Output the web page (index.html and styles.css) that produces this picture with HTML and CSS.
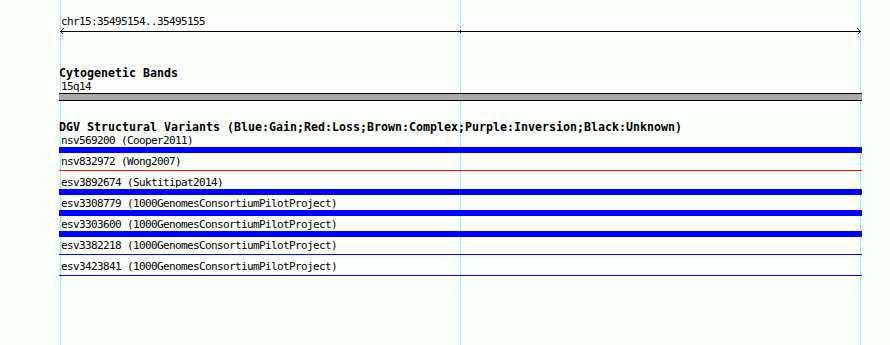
FILE: index.html
```html
<!DOCTYPE html>
<html>
<head>
  <title>chr15:35495154..35495155</title>
  <link rel="stylesheet" href="styles.css">
</head>
<body>
  <div class="panel">
    <div class="tracks">
      <div class="ruler-label">chr15:35495154..35495155</div>
      <svg class="ruler" width="803" height="7" viewBox="0 0 803 7" shape-rendering="crispEdges">
        <rect x="1" y="3" width="801" height="1" fill="#000"/>
        <rect x="401" y="2" width="1" height="3" fill="#000"/>
        <polyline points="4.5,0.5 1.5,3.5 4.5,6.5" fill="none" stroke="#000" stroke-width="1"/>
        <polyline points="798.5,0.5 801.5,3.5 798.5,6.5" fill="none" stroke="#000" stroke-width="1"/>
      </svg>

      <div class="track cyto">
        <div class="track-title">Cytogenetic Bands</div>
        <div class="feature-label">15q14</div>
        <div class="band"></div>
      </div>

      <div class="track dgv">
        <div class="track-title">DGV Structural Variants (Blue:Gain;Red:Loss;Brown:Complex;Purple:Inversion;Black:Unknown)</div>

        <div class="feature">
          <div class="feature-label">nsv569200 (Cooper2011)</div>
          <div class="glyph"><div class="bar thick gain"></div></div>
        </div>
        <div class="feature">
          <div class="feature-label">nsv832972 (Wong2007)</div>
          <div class="glyph"><div class="bar thin loss"></div></div>
        </div>
        <div class="feature">
          <div class="feature-label">esv3892674 (Suktitipat2014)</div>
          <div class="glyph"><div class="bar thick gain"></div></div>
        </div>
        <div class="feature">
          <div class="feature-label">esv3308779 (1000GenomesConsortiumPilotProject)</div>
          <div class="glyph"><div class="bar thick gain"></div></div>
        </div>
        <div class="feature">
          <div class="feature-label">esv3303600 (1000GenomesConsortiumPilotProject)</div>
          <div class="glyph"><div class="bar thick gain"></div></div>
        </div>
        <div class="feature">
          <div class="feature-label">esv3382218 (1000GenomesConsortiumPilotProject)</div>
          <div class="glyph"><div class="bar thin gain"></div></div>
        </div>
        <div class="feature">
          <div class="feature-label">esv3423841 (1000GenomesConsortiumPilotProject)</div>
          <div class="glyph"><div class="bar thin gain"></div></div>
        </div>
      </div>
    </div>
  </div>
</body>
</html>
```

FILE: styles.css
```css
html, body {
  margin: 0;
  padding: 0;
}

body {
  background-color: #fcfffc;
  color: #000;
  font-family: "DejaVu Sans Mono", "Liberation Mono", monospace;
}

.panel {
  width: 890px;
  height: 345px;
  box-sizing: border-box;
  padding-top: 15px;
  padding-left: 59px;
  background-color: #fcfffc;
  background-image: linear-gradient(to right,
    transparent 60px, #a0eaf0 60px, #a0eaf0 61px, transparent 61px,
    transparent 460px, #a0eaf0 460px, #a0eaf0 461px, transparent 461px,
    transparent 860px, #a0eaf0 860px, #a0eaf0 861px, transparent 861px);
}

.tracks {
  width: 803px;
}

.ruler-label {
  padding-left: 2px;
  font-size: 11px;
  letter-spacing: -0.62px;
  line-height: 13px;
  height: 13px;
}

.ruler {
  display: block;
}

.track-title {
  padding-top: 1px;
  font-size: 11.63px;
  font-weight: bold;
  line-height: 13px;
  white-space: nowrap;
}

.cyto {
  margin-top: 32px;
}

.cyto .track-title {
  padding-top: 0;
  height: 13px;
  line-height: 12px;
}

.cyto .feature-label {
  padding-top: 1px;
  height: 11px;
  line-height: 12px;
}

.band {
  margin-top: 1px;
  height: 6px;
  border-top: 1px solid #000;
  border-bottom: 1px solid #000;
  background-color: #aaa8ab;
}

.dgv {
  margin-top: 19px;
}

.dgv .track-title {
  height: 12px;
}

.feature-label {
  padding-left: 2px;
  padding-top: 1px;
  height: 13px;
  font-size: 11px;
  letter-spacing: -0.62px;
  line-height: 13px;
  white-space: nowrap;
}

.glyph {
  display: flow-root;
  height: 6px;
  margin-bottom: 1px;
}

.bar.thick {
  height: 6px;
}

.bar.thin {
  margin-top: 2px;
  height: 1px;
}

.gain {
  background-color: #0000ff;
}

.loss {
  background-color: #ff0000;
}
```
